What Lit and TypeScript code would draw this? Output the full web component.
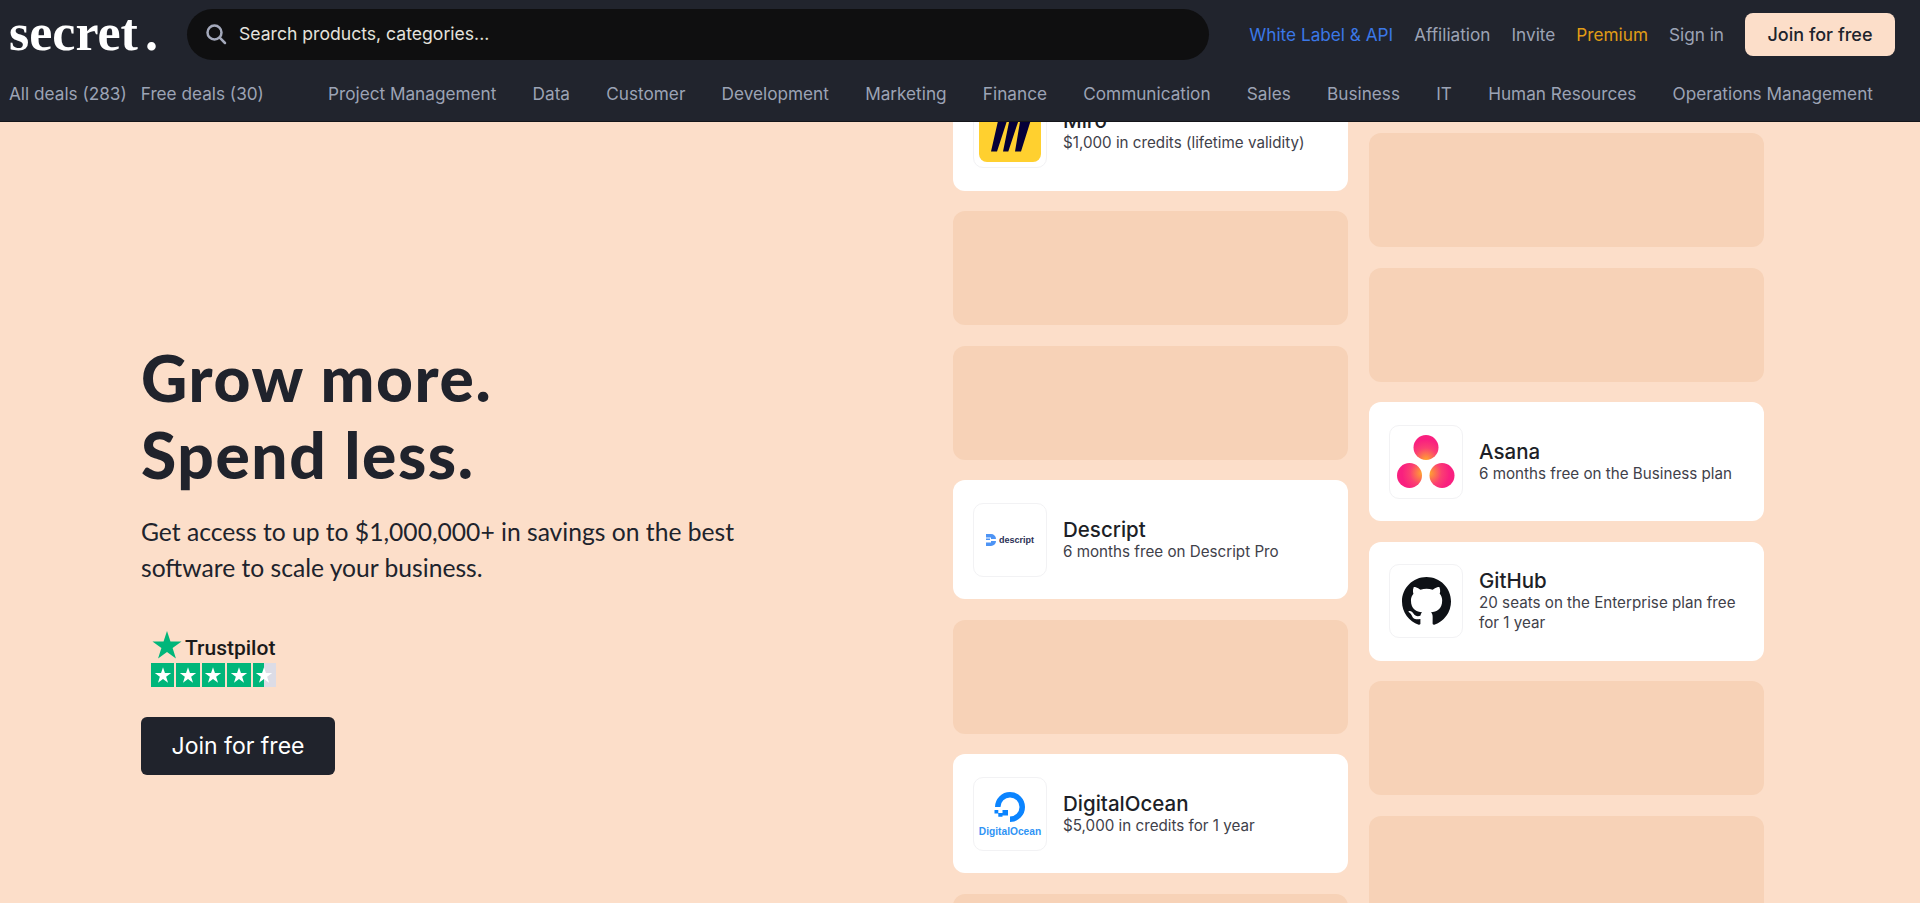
import { LitElement, html, css, svg } from "lit";
import { customElement } from "lit/decorators.js";

type Deal = { name: string; text: string; logo: string } | null;

const COL_A: Deal[] = [
  { name: "Miro", text: "$1,000 in credits (lifetime validity)", logo: "miro" },
  null,
  null,
  { name: "Descript", text: "6 months free on Descript Pro", logo: "descript" },
  null,
  { name: "DigitalOcean", text: "$5,000 in credits for 1 year", logo: "digitalocean" },
  null,
];

const COL_B: Deal[] = [
  null,
  null,
  { name: "Asana", text: "6 months free on the Business plan", logo: "asana" },
  { name: "GitHub", text: "20 seats on the Enterprise plan free for 1 year", logo: "github" },
  null,
  null,
];

const CATEGORIES = [
  "Project Management",
  "Data",
  "Customer",
  "Development",
  "Marketing",
  "Finance",
  "Communication",
  "Sales",
  "Business",
  "IT",
  "Human Resources",
  "Operations Management",
];

const STAR = "M12 1.5l2.6 7.9h8.3l-6.7 4.9 2.5 7.9-6.7-4.9-6.7 4.9 2.5-7.9L1.1 9.4h8.3z";

const GITHUB =
  "M8 0C3.58 0 0 3.58 0 8c0 3.54 2.29 6.53 5.47 7.59.4.07.55-.17.55-.38 0-.19-.01-.82-.01-1.49-2.01.37-2.53-.49-2.69-.94-.09-.23-.48-.94-.82-1.13-.28-.15-.68-.52-.01-.53.63-.01 1.08.58 1.23.82.72 1.21 1.87.87 2.33.66.07-.52.28-.87.51-1.07-1.78-.2-3.64-.89-3.64-3.95 0-.87.31-1.59.82-2.15-.08-.2-.36-1.02.08-2.12 0 0 .67-.21 2.2.82.64-.18 1.32-.27 2-.27.68 0 1.36.09 2 .27 1.53-1.04 2.2-.82 2.2-.82.44 1.1.16 1.92.08 2.12.51.56.82 1.27.82 2.15 0 3.07-1.87 3.75-3.65 3.95.29.25.54.73.54 1.48 0 1.07-.01 1.93-.01 2.2 0 .21.15.46.55.38A8.013 8.013 0 0016 8c0-4.42-3.58-8-8-8z";

@customElement("app-root")
export class AppRoot extends LitElement {
  static styles = css`
    :host {
      display: block;
      height: 100vh;
      overflow: hidden;
      background: #fcdec9;
      font-family: "Inter", "Liberation Sans", sans-serif;
      color: #20232c;
    }
    .header {
      position: relative;
      z-index: 2;
      height: 122px;
      box-sizing: border-box;
      background: #21242d;
      border-bottom: 1px solid #14151a;
      padding: 9px 25px 0 9px;
    }
    .top {
      display: flex;
      align-items: center;
      height: 51px;
    }
    .logo {
      width: 178px;
      flex: none;
      font-family: "Liberation Serif", serif;
      font-weight: 700;
      font-size: 52px;
      line-height: 47px;
      padding-bottom: 4px;
      color: #fff;
    }
    .logo span {
      margin-left: 7px;
    }
    .search {
      flex: none;
      width: 1022px;
      height: 51px;
      box-sizing: border-box;
      border-radius: 26px;
      background: #0f0f10;
      display: flex;
      align-items: center;
      gap: 12px;
      padding-left: 18px;
      color: #e4e2dd;
      font-size: 17.6px;
    }
    .search svg {
      display: block;
      margin-top: -2px;
    }
    .search span {
      margin-top: -2px;
    }
    .links {
      margin-left: auto;
      display: flex;
      align-items: center;
      gap: 21px;
      font-size: 17.2px;
      color: #9ca3b5;
    }
    .blue {
      color: #3b78e7;
    }
    .gold {
      color: #e09c16;
    }
    .join-small {
      width: 150px;
      height: 43px;
      border-radius: 8px;
      background: #fcdec9;
      color: #20232c;
      font-weight: 500;
      font-size: 18px;
      display: flex;
      align-items: center;
      justify-content: center;
    }
    .nav {
      display: flex;
      align-items: center;
      height: 50px;
      margin-top: 8px;
      font-size: 17.2px;
      color: #9ca3b5;
    }
    .deals {
      flex: none;
      width: 319px;
      display: flex;
      gap: 14px;
    }
    .cats {
      flex: 1;
      display: flex;
      justify-content: space-between;
      padding-right: 22px;
    }
    .main {
      display: grid;
      grid-template-columns: 932px 395px 395px;
      column-gap: 21px;
      height: 781px;
    }
    .hero {
      padding: 217px 0 0 141px;
    }
    h1 {
      margin: 0;
      font-family: "Lato", sans-serif;
      font-weight: 900;
      font-size: 64px;
      line-height: 77px;
      letter-spacing: 1.6px;
      color: #20232c;
    }
    .lead {
      margin: 21px 0 0;
      width: 640px;
      font-family: "Lato", sans-serif;
      font-size: 24.65px;
      line-height: 36px;
      color: #20232c;
    }
    .pilot {
      margin-top: 41px;
      margin-left: 10px;
      width: 126px;
    }
    .pilot-top {
      display: flex;
      align-items: flex-end;
      height: 34px;
      font-family: "Roboto", sans-serif;
      font-weight: 500;
      font-size: 21px;
      line-height: 25px;
      color: #1a1a1a;
      gap: 2px;
    }
    .stars {
      display: flex;
      gap: 2px;
      margin-top: 2px;
    }
    .stars span {
      width: 23.4px;
      height: 24px;
      background: #00b67a;
      display: flex;
      align-items: center;
      justify-content: center;
    }
    .stars span.partial {
      background: linear-gradient(90deg, #00b67a 50%, #dcdce6 50%);
    }
    .join {
      margin-top: 30px;
      width: 194px;
      height: 58px;
      border-radius: 6px;
      background: #20232c;
      color: #fff;
      font-size: 23px;
      display: flex;
      align-items: center;
      justify-content: center;
    }
    .col {
      display: flex;
      flex-direction: column;
      gap: 20.5px;
    }
    .col.a {
      margin-top: -50.5px;
    }
    .col.b {
      margin-top: 11px;
    }
    .blank {
      flex: none;
      height: 114px;
      border-radius: 12px;
      background: #f7d2b7;
    }
    .card {
      flex: none;
      height: 119px;
      box-sizing: border-box;
      border-radius: 12px;
      background: #fff;
      display: flex;
      align-items: center;
      padding: 0 20px;
      gap: 16px;
    }
    .mark {
      flex: none;
      width: 74px;
      height: 74px;
      box-sizing: border-box;
      border: 1px solid #f2f2f4;
      border-radius: 10px;
      display: flex;
      flex-direction: column;
      align-items: center;
      justify-content: center;
    }
    .name {
      font-size: 20.5px;
      line-height: 24px;
      font-weight: 500;
      color: #1d1f27;
    }
    .text {
      font-size: 15.2px;
      line-height: 20px;
      color: #3f414a;
    }
    .ds {
      display: flex;
      align-items: center;
      gap: 3px;
      font-family: "Liberation Sans", sans-serif;
      font-size: 9px;
      font-weight: 700;
      color: #2b2f55;
    }
    .do {
      font-family: "Liberation Sans", sans-serif;
      font-size: 10.2px;
      font-weight: 700;
      color: #2f94f5;
      margin-top: 3px;
    }
  `;

  private starSvg(size: number, fill: string) {
    return html`<svg width=${size} height=${size} viewBox="0 0 24 24">
      <path d=${STAR} fill=${fill}></path>
    </svg>`;
  }

  private renderLogo(logo: string) {
    switch (logo) {
      case "miro":
        return html`<svg width="62" height="62" viewBox="0 0 62 62">
          <rect width="62" height="62" rx="8" fill="#ffd02f"></rect>
          <path
            d="M21.500 10h10L18 51.500h-6zM32.500 10H43L29.300 51.500H24zM43 10h12L42 51.500h-6z"
            fill="#050038"
          ></path>
        </svg>`;
      case "descript":
        return html`<div class="ds">
          <svg width="10" height="12" viewBox="0 0 10 12">
            <path
              d="M0 0h5a5 5 0 0 1 5 5H5V3.500H0zM0 4.600h4v1.400H0zM5 7h5a5 5 0 0 1-5 5H0V8.500h5z"
              fill="#4d94f5"
            ></path>
          </svg>
          <span>descript</span>
        </div>`;
      case "digitalocean":
        return html`<svg width="32" height="32" viewBox="0 0 32 32">
            <path
              d="M16 31v-5.500a9.500 9.500 0 1 0-9.500-9.500H1a15 15 0 1 1 15 15z"
              fill="#0b84ff"
            ></path>
            <path
              d="M8.500 19h5.500v5.500H8.500zM4.300 22h4.200v3.800H4.300zM.5 19h3.800v3.400H.5z"
              fill="#0b84ff"
            ></path>
          </svg>
          <div class="do">DigitalOcean</div>`;
      case "asana":
        return html`<svg width="58" height="54" viewBox="0 0 58 54">
          <defs>
            <radialGradient id="asana-t" cx="0.5" cy="1" r="0.8">
              <stop offset="0" stop-color="#ffa62e"></stop>
              <stop offset="0.6" stop-color="#fb3f72"></stop>
              <stop offset="1" stop-color="#f9207f"></stop>
            </radialGradient>
            <radialGradient id="asana-l" cx="1" cy="0.4" r="0.8">
              <stop offset="0" stop-color="#ffa62e"></stop>
              <stop offset="0.6" stop-color="#fb3f72"></stop>
              <stop offset="1" stop-color="#f9207f"></stop>
            </radialGradient>
            <radialGradient id="asana-r" cx="0" cy="0.4" r="0.8">
              <stop offset="0" stop-color="#ffa62e"></stop>
              <stop offset="0.6" stop-color="#fb3f72"></stop>
              <stop offset="1" stop-color="#f9207f"></stop>
            </radialGradient>
          </defs>
          <circle cx="29" cy="12.500" r="12.500" fill="url(#asana-t)"></circle>
          <circle cx="12.500" cy="40.500" r="12.500" fill="url(#asana-l)"></circle>
          <circle cx="45" cy="40.500" r="12.500" fill="url(#asana-r)"></circle>
        </svg>`;
      case "github":
        return html`<svg width="49" height="49" viewBox="0 0 16 16">
          <path d=${GITHUB} fill="#0e1116"></path>
        </svg>`;
    }
    return null;
  }

  private renderDeal(deal: Deal) {
    if (!deal) return html`<div class="blank"></div>`;
    return html`<div class="card">
      <div class="mark">${this.renderLogo(deal.logo)}</div>
      <div>
        <div class="name">${deal.name}</div>
        <div class="text">${deal.text}</div>
      </div>
    </div>`;
  }

  render() {
    return html`
      <div class="header">
        <div class="top">
          <div class="logo">secret<span>.</span></div>
          <div class="search">
            <svg width="22" height="22" viewBox="0 0 22 22" fill="none" stroke="#a4a9bb" stroke-width="2.500">
              ${svg`<circle cx="9.500" cy="9.500" r="7"></circle><path d="M14.700 14.700L20 20" stroke-linecap="round"></path>`}
            </svg>
            <span>Search products, categories...</span>
          </div>
          <div class="links">
            <span class="blue">White Label &amp; API</span>
            <span>Affiliation</span>
            <span>Invite</span>
            <span class="gold">Premium</span>
            <span>Sign in</span>
            <div class="join-small">Join for free</div>
          </div>
        </div>
        <div class="nav">
          <div class="deals">
            <span>All deals (283)</span>
            <span>Free deals (30)</span>
          </div>
          <div class="cats">${CATEGORIES.map((c) => html`<span>${c}</span>`)}</div>
        </div>
      </div>
      <div class="main">
        <div class="hero">
          <h1>Grow more.<br />Spend less.</h1>
          <p class="lead">
            Get access to up to $1,000,000+ in savings on the best<br />software to scale your business.
          </p>
          <div class="pilot">
            <div class="pilot-top">${this.starSvg(32, "#00b67a")}<span>Trustpilot</span></div>
            <div class="stars">
              ${[0, 1, 2, 3].map(() => html`<span>${this.starSvg(18, "#fff")}</span>`)}
              <span class="partial">${this.starSvg(18, "#fff")}</span>
            </div>
          </div>
          <div class="join">Join for free</div>
        </div>
        <div class="col a">${COL_A.map((d) => this.renderDeal(d))}</div>
        <div class="col b">${COL_B.map((d) => this.renderDeal(d))}</div>
      </div>
    `;
  }
}
